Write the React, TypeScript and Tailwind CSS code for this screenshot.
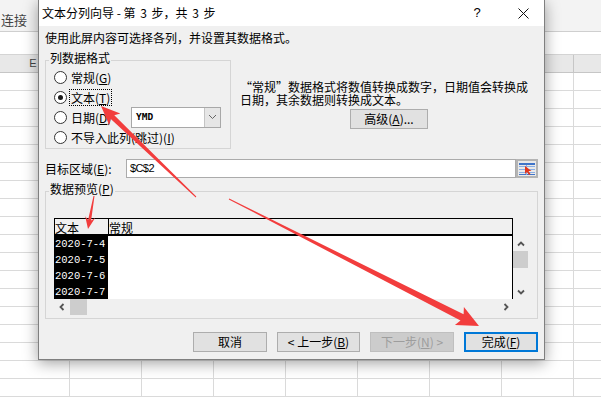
import React from "react";

type Pt = [number, number];

function arrowPoints(tail: Pt, tip: Pt, tw: number, sw: number, hl: number, hw: number) {
  const dx = tip[0] - tail[0];
  const dy = tip[1] - tail[1];
  const len = Math.hypot(dx, dy);
  const ux = dx / len;
  const uy = dy / len;
  const px = -uy;
  const py = ux;
  const bx = tip[0] - ux * hl;
  const by = tip[1] - uy * hl;
  const nx = tip[0] - ux * (hl - 3);
  const ny = tip[1] - uy * (hl - 3);
  const pts: Pt[] = [
    [tail[0] + (px * tw) / 2, tail[1] + (py * tw) / 2],
    [nx + (px * sw) / 2, ny + (py * sw) / 2],
    [bx + px * hw, by + py * hw],
    tip,
    [bx - px * hw, by - py * hw],
    [nx - (px * sw) / 2, ny - (py * sw) / 2],
    [tail[0] - (px * tw) / 2, tail[1] - (py * tw) / 2],
  ];
  return pts.map((p) => p.map((v) => v.toFixed(1)).join(",")).join(" ");
}

function Arrows() {
  return (
    <svg className="absolute left-0 top-0 pointer-events-none" width="601" height="397" viewBox="0 0 601 397">
      <polygon points={arrowPoints([196, 197], [101, 106], 1, 5, 19, 8)} fill="#f23d3d" />
      <polygon points={arrowPoints([94, 196], [88, 229], 1, 3, 12, 5)} fill="#f23d3d" />
      <polygon points={arrowPoints([229, 199], [479, 326], 1, 7, 22, 10)} fill="#f23d3d" />
    </svg>
  );
}

function ExcelBackground() {
  const cols = [0, 1, 2, 3, 4, 5, 6, 7, 8];
  const rows = Array.from({ length: 18 }, (_, i) => i);
  return (
    <div className="flex flex-col w-[601px] h-[397px] bg-white">
      <div className="h-[34px] bg-[#f3f3f3] border-b border-[#cfcfcf] flex items-end pb-[3px]">
        <span className="text-[13px] leading-[16px] text-[#444444] pl-[1px]">连接</span>
      </div>
      <div className="h-[24px] bg-white border-b border-[#d4d4d4]" />
      <div className="h-[19px] flex bg-[#e8e8e8] border-b border-[#c6c6c6]">
        {cols.map((c) => (
          <div
            key={c}
            className={
              c === 0
                ? "w-[70px] shrink-0 border-r border-[#c6c6c6] flex items-center justify-center pr-[3px] text-[11px] text-[#444444] font-['Liberation_Sans',sans-serif]"
                : "w-[72px] shrink-0 border-r border-[#c6c6c6]"
            }
          >
            {c === 0 ? "E" : null}
          </div>
        ))}
      </div>
      {rows.map((r) => (
        <div key={r} className="h-[18px] shrink-0 flex border-b border-[#dadada]">
          {cols.map((c) => (
            <div key={c} className={c === 0 ? "w-[70px] shrink-0 border-r border-[#dadada]" : "w-[72px] shrink-0 border-r border-[#dadada]"} />
          ))}
        </div>
      ))}
    </div>
  );
}

function Radio({ checked }: { checked?: boolean }) {
  return (
    <span className="w-[13px] h-[13px] shrink-0 rounded-full border border-[#333333] bg-white flex items-center justify-center">
      {checked ? <span className="w-[5px] h-[5px] rounded-full bg-[#1a1a1a]" /> : null}
    </span>
  );
}

function ChevronLeft() {
  return (
    <svg width="6" height="8" viewBox="0 0 6 8">
      <polyline points="4.5,1 1.5,4 4.5,7" fill="none" stroke="#555555" strokeWidth="1.8" />
    </svg>
  );
}
function ChevronRight() {
  return (
    <svg width="6" height="8" viewBox="0 0 6 8">
      <polyline points="1.5,1 4.5,4 1.5,7" fill="none" stroke="#555555" strokeWidth="1.8" />
    </svg>
  );
}
function ChevronUp() {
  return (
    <svg width="8" height="6" viewBox="0 0 8 6">
      <polyline points="1,4.5 4,1.5 7,4.5" fill="none" stroke="#555555" strokeWidth="1.8" />
    </svg>
  );
}
function ChevronDown() {
  return (
    <svg width="8" height="6" viewBox="0 0 8 6">
      <polyline points="1,1.5 4,4.5 7,1.5" fill="none" stroke="#555555" strokeWidth="1.8" />
    </svg>
  );
}

function RangeIcon() {
  return (
    <svg width="16" height="12" viewBox="0 0 16 12">
      <rect x="0" y="0" width="16" height="2" fill="#3f74c9" />
      <rect x="0" y="3" width="16" height="1" fill="#8aaee3" />
      <rect x="0" y="6" width="16" height="1" fill="#8aaee3" />
      <rect x="0" y="9" width="16" height="1" fill="#8aaee3" />
      <rect x="0" y="11" width="16" height="1" fill="#3f74c9" />
      <rect x="7" y="2" width="1" height="10" fill="#8aaee3" />
      <polygon points="6,3 6,11 8,9 10,12 11.5,11 9.5,8 12.5,8" fill="#e2361e" />
    </svg>
  );
}

function Dialog() {
  return (
    <div className="absolute left-[38px] top-0 w-[507px] h-[360px] bg-[#f0f0f0] border border-t-0 border-[#7f7f7f] shadow-[0_3px_14px_rgba(0,0,0,0.38)] flex flex-col">
      {/* Title bar */}
      <div className="h-[26px] shrink-0 bg-white flex items-center pl-[3px]">
        <span className="leading-[16px] whitespace-nowrap">
          文本分列向导 - 第<span className="inline-block w-[16px] text-center">3</span>步，共<span className="inline-block w-[16px] text-center">3</span>步
        </span>
        <div className="ml-auto flex items-center h-full">
          <span className="w-[50px] text-center text-[13px] leading-[16px] font-['Liberation_Sans',sans-serif]">?</span>
          <span className="w-[42px] flex items-center justify-center">
            <svg width="11" height="11" viewBox="0 0 11 11">
              <line x1="0.5" y1="0.5" x2="10.5" y2="10.5" stroke="#111111" strokeWidth="1" />
              <line x1="10.5" y1="0.5" x2="0.5" y2="10.5" stroke="#111111" strokeWidth="1" />
            </svg>
          </span>
        </div>
      </div>

      {/* Body */}
      <div className="flex flex-col px-[6px]">
        <div className="mt-[4px] leading-[16px] whitespace-nowrap">使用此屏内容可选择各列，并设置其数据格式。</div>

        <div className="mt-[14px] flex">
          {/* Column data format group */}
          <div className="w-[186px] h-[89px] shrink-0 border border-[#d5d5d5] flex flex-col">
            <div className="-mt-[11px] ml-[3px] w-fit px-[1px] bg-[#f0f0f0] leading-[16px]">列数据格式</div>
            <div className="mt-[1px] flex flex-col">
              <div className="h-[20px] flex items-center pl-[8px]">
                <Radio />
                <span className="ml-[2px] px-[1px] border border-transparent leading-[15px] whitespace-nowrap">
                  常规(<u>G</u>)
                </span>
              </div>
              <div className="h-[20px] flex items-center pl-[8px]">
                <Radio checked />
                <span className="ml-[2px] px-[1px] border border-dotted border-black leading-[15px] whitespace-nowrap">
                  文本(<u>T</u>)
                </span>
              </div>
              <div className="h-[20px] flex items-center pl-[8px] pr-[9px]">
                <Radio />
                <span className="ml-[2px] px-[1px] border border-transparent leading-[15px] whitespace-nowrap">
                  日期(<u>D</u>)
                </span>
                <div className="ml-auto w-[90px] h-[21px] border border-[#a8a8a8] bg-white flex">
                  <span className="flex-1 flex items-center pl-[4px] text-[9.5px] font-bold font-['DejaVu_Sans_Mono',monospace]">YMD</span>
                  <span className="w-[16px] border-l border-[#c4c4c4] bg-[#e6e6e6] flex items-center justify-center">
                    <svg width="9" height="6" viewBox="0 0 9 6">
                      <polyline points="1,1 4.5,4.5 8,1" fill="none" stroke="#666666" strokeWidth="1" />
                    </svg>
                  </span>
                </div>
              </div>
              <div className="h-[20px] flex items-center pl-[8px]">
                <Radio />
                <span className="ml-[2px] px-[1px] border border-transparent leading-[15px] whitespace-nowrap">
                  不导入此列(跳过)(<u>I</u>)
                </span>
              </div>
            </div>
          </div>

          {/* Description + advanced */}
          <div className="ml-[9px] pt-[20px] flex flex-col">
            <div className="w-[292px] leading-[13px] whitespace-nowrap">
              <div>
                <span className="inline-block w-[12px] text-right">“</span>常规<span className="inline-block w-[12px] text-left">”</span>数据格式将数值转换成数字，日期值会转换成
              </div>
              <div>日期，其余数据则转换成文本。</div>
            </div>
            <div className="mt-[3px] ml-[110px] w-[78px] h-[20px] bg-[#e1e1e1] border border-[#adadad] flex items-center justify-center leading-[16px] whitespace-nowrap">
              高级(<u>A</u>)...
            </div>
          </div>
        </div>

        {/* Destination */}
        <div className="mt-[10px] h-[19px] flex items-center">
          <span className="w-[81px] shrink-0 leading-[16px] whitespace-nowrap">
            目标区域(<u>E</u>):
          </span>
          <div className="w-[390px] h-[19px] bg-white border border-[#ababab] flex items-center pl-[3px] text-[11px] tracking-[-0.6px] font-['Liberation_Sans',sans-serif]">
            $C$2
          </div>
          <div className="w-[22px] h-[19px] border-2 border-[#b4b4b4] bg-[#e9e9e9] flex items-center justify-center">
            <RangeIcon />
          </div>
        </div>

        {/* Data preview group */}
        <div className="mt-[13px] w-full h-[128px] border border-[#d5d5d5] flex flex-col">
          <div className="-mt-[11px] ml-[3px] w-fit px-[1px] bg-[#f0f0f0] leading-[16px]">
            数据预览(<u>P</u>)
          </div>
          <div className="mt-[21px] pl-[8px] flex">
            <div className="w-[459px] flex flex-col">
              <div className="h-[18px] flex border-t border-l border-r border-b-2 border-black">
                <div className="w-[54px] border-r border-black flex items-end leading-[12px]">文本</div>
                <div className="flex-1 flex items-end leading-[12px]">常规</div>
              </div>
              <div className="h-[63px] flex border-l border-r border-black bg-white overflow-hidden">
                <div className="w-[53px] bg-black flex flex-col text-white text-[10.5px] font-['Liberation_Mono',monospace]">
                  <div className="h-[16px] shrink-0 leading-[16px]">2020-7-4</div>
                  <div className="h-[16px] shrink-0 leading-[16px]">2020-7-5</div>
                  <div className="h-[16px] shrink-0 leading-[16px]">2020-7-6</div>
                  <div className="h-[16px] shrink-0 leading-[16px]">2020-7-7</div>
                </div>
                <div className="flex-1" />
              </div>
              <div className="h-[16px] flex items-stretch">
                <div className="w-[15px] flex items-center justify-center">
                  <ChevronLeft />
                </div>
                <div className="w-[17px] ml-[1px] bg-[#cdcdcd]" />
                <div className="flex-1" />
                <div className="w-[15px] flex items-center justify-center">
                  <ChevronRight />
                </div>
              </div>
            </div>
            <div className="w-[15px] flex flex-col">
              <div className="h-[18px]" />
              <div className="h-[15px] flex items-center justify-center">
                <ChevronUp />
              </div>
              <div className="h-[17px] bg-[#cdcdcd]" />
              <div className="h-[16px]" />
              <div className="h-[15px] flex items-center justify-center">
                <ChevronDown />
              </div>
            </div>
          </div>
        </div>

        {/* Buttons */}
        <div className="mt-[13px] flex justify-end gap-[10px]">
          <div className="w-[74px] h-[20px] bg-[#e1e1e1] border border-[#adadad] flex items-center justify-center leading-[16px]">取消</div>
          <div className="w-[83px] h-[20px] bg-[#e1e1e1] border border-[#adadad] flex items-center justify-center leading-[16px] whitespace-nowrap">
            &lt; 上一步(<u>B</u>)
          </div>
          <div className="w-[84px] h-[20px] bg-[#cccccc] border border-[#bfbfbf] flex items-center justify-center leading-[16px] text-[#9d9d9d] whitespace-nowrap">
            下一步(<u>N</u>) &gt;
          </div>
          <div className="w-[74px] h-[20px] bg-[#e1e1e1] border-2 border-[#0078d7] flex items-center justify-center leading-[16px] whitespace-nowrap">
            完成(<u>F</u>)
          </div>
        </div>
      </div>
    </div>
  );
}

export default function App() {
  return (
    <div className="relative w-[601px] h-[397px] overflow-hidden bg-white text-[12px] text-black font-['Noto_Sans_CJK_SC',sans-serif]">
      <ExcelBackground />
      <Dialog />
      <Arrows />
    </div>
  );
}
